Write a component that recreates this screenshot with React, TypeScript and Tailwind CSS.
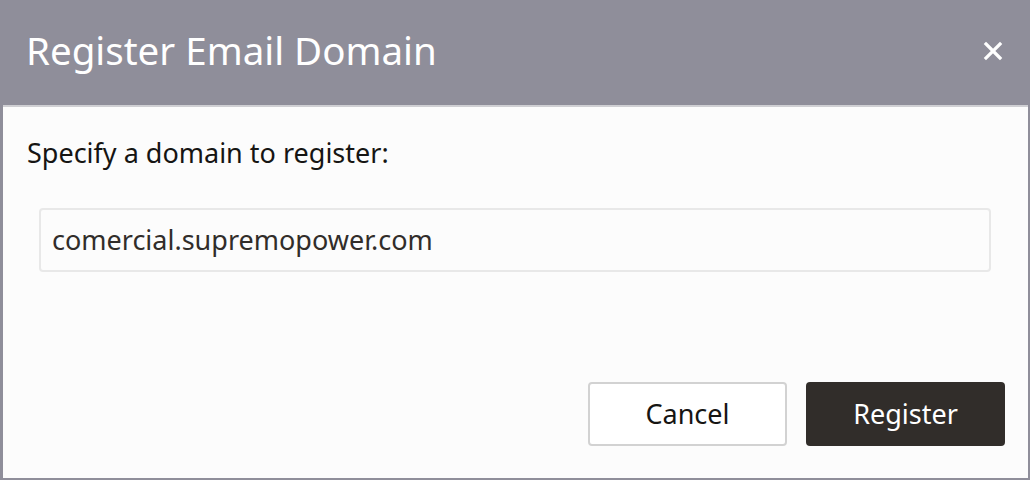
export default function App() {
  return (
    <div
      className="flex h-[480px] w-[1030px] flex-col bg-[#8f8e9a] pb-[2px] pl-[3px] pr-[2px]"
      style={{ fontFamily: '"Noto Sans", "Open Sans", sans-serif' }}
    >
      <header className="-ml-[3px] -mr-[2px] flex h-[105px] items-center justify-between pb-[4px] pl-[26px] pr-[25px]">
        <h1 className="text-[38.5px] leading-none text-white">Register Email Domain</h1>
        <button type="button" aria-label="Close" className="flex h-6 w-6 items-center justify-center">
          <svg width="20" height="20" viewBox="0 0 20 20" fill="none">
            <path d="M3 3L17 17M17 3L3 17" stroke="white" strokeWidth="3.2" strokeLinecap="square" />
          </svg>
        </button>
      </header>
      <div className="h-[2px] bg-[#cfcfd3]" />
      <main className="flex flex-1 flex-col bg-[#fcfcfc] pl-[24px] pr-[23px]">
        <p className="mt-[28px] text-[27px] leading-[36px] text-[#161513]">Specify a domain to register:</p>
        <div className="ml-[12px] mr-[14px] mt-[37px] flex h-[64px] items-center rounded-[4px] border-2 border-[#e8e8e8] bg-[#fcfcfc] px-[11px]">
          <span className="text-[27px] text-[#312d2a]">comercial.supremopower.com</span>
        </div>
        <div className="mt-auto mb-[32px] flex justify-end gap-[19px]">
          <button
            type="button"
            className="h-[64px] w-[199px] rounded-[4px] border-2 border-[#d2d2d2] bg-white text-[27px] text-[#161513]"
          >
            Cancel
          </button>
          <button
            type="button"
            className="h-[64px] w-[199px] rounded-[4px] bg-[#312d2a] text-[27px] text-white"
          >
            Register
          </button>
        </div>
      </main>
    </div>
  );
}
